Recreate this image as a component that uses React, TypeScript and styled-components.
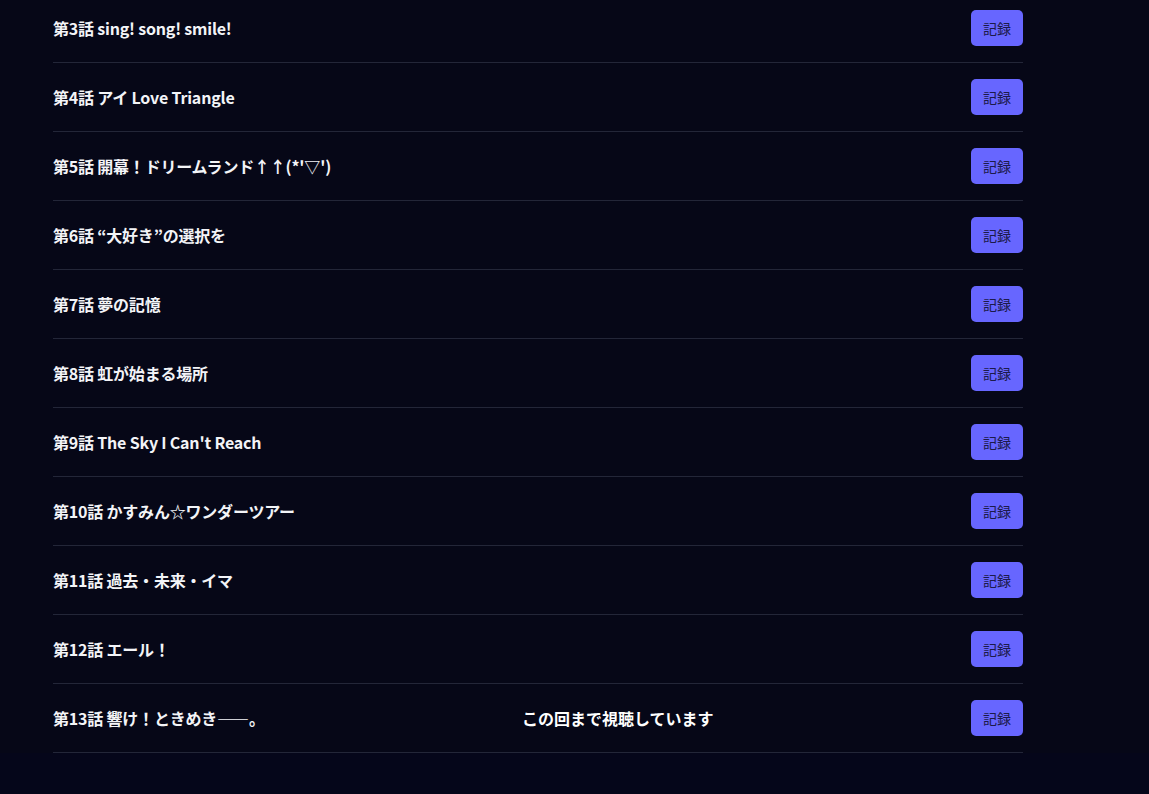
import React from "react";
import styled, { createGlobalStyle } from "styled-components";

const Global = createGlobalStyle`
  html, body { margin: 0; padding: 0; background: #05061a; }
  body {
    background: #060717;
    color: #f1f2f6;
    font-family: "Noto Sans CJK JP", "Noto Sans", sans-serif;
    overflow: hidden;
  }
`;

const Page = styled.main`
  width: 970px;
  padding: 0 0 0 53px;
  margin-top: -6px;
`;

const List = styled.ul`
  list-style: none;
  margin: 0;
  padding: 0;
`;

const Row = styled.li`
  display: flex;
  align-items: center;
  justify-content: space-between;
  height: 68px;
  border-bottom: 1px solid #232638;
`;

const Title = styled.span`
  font-size: 16px;
  font-weight: 700;
  color: #f3f4f7;
  letter-spacing: -0.2px;
`;

const Status = styled.span`
  font-size: 16px;
  font-weight: 700;
  color: #ffffff;
`;

const RecordButton = styled.button`
  width: 52px;
  height: 36px;
  border: none;
  border-radius: 5px;
  background: #6766ff;
  color: #1c1a4a;
  font-family: "Noto Sans CJK JP", sans-serif;
  font-size: 14px;
  font-weight: 400;
  padding: 0;
  cursor: pointer;
`;

const episodes = [
  "第3話 sing! song! smile!",
  "第4話 アイ Love Triangle",
  "第5話 開幕！ドリームランド↑↑(*'▽')",
  "第6話 “大好き”の選択を",
  "第7話 夢の記憶",
  "第8話 虹が始まる場所",
  "第9話 The Sky I Can't Reach",
  "第10話 かすみん☆ワンダーツアー",
  "第11話 過去・未来・イマ",
  "第12話 エール！",
  "第13話 響け！ときめき――。",
];

export default function App() {
  return (
    <>
      <Global />
      <Page>
        <List>
          {episodes.map((ep, i) => (
            <Row key={ep}>
              <Title>{ep}</Title>
              {i === episodes.length - 1 && <Status>この回まで視聴しています</Status>}
              <RecordButton>記録</RecordButton>
            </Row>
          ))}
        </List>
      </Page>
    </>
  );
}
